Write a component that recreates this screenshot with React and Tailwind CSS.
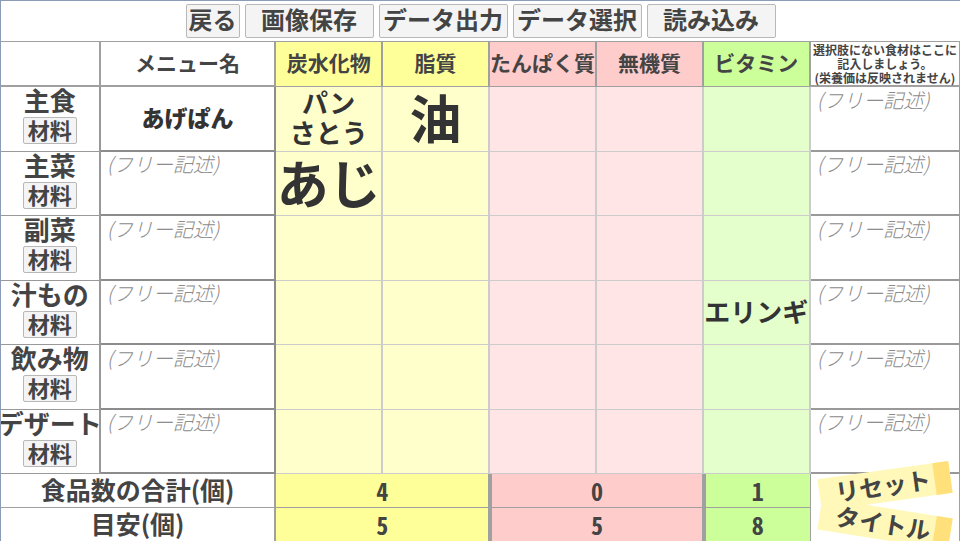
import React from "react";

const columns = [
  { label: "炭水化物", head: "bg-[#ffff99]", body: "bg-[#ffffcc]" },
  { label: "脂質", head: "bg-[#ffff99]", body: "bg-[#ffffcc]" },
  { label: "たんぱく質", head: "bg-[#ffcccc]", body: "bg-[#ffe5e5]" },
  { label: "無機質", head: "bg-[#ffcccc]", body: "bg-[#ffe5e5]" },
  { label: "ビタミン", head: "bg-[#ccff99]", body: "bg-[#e5ffcc]" },
];

const rows = [
  {
    label: "主食",
    menu: "あげぱん",
    foods: {
      0: { lines: ["パン", "さとう"], size: "text-[26px] leading-[30px]" },
      1: { lines: ["油"], size: "text-[52px] leading-[56px]" },
    },
  },
  { label: "主菜", foods: { 0: { lines: ["あじ"], size: "text-[52px] leading-[56px]" } } },
  { label: "副菜", foods: {} },
  { label: "汁もの", foods: { 4: { lines: ["エリンギ"], size: "text-[26px] leading-[30px]" } } },
  { label: "飲み物", foods: {} },
  { label: "デザート", foods: {} },
];

const totals = [
  { label: "食品数の合計(個)", values: [4, 0, 1] },
  { label: "目安(個)", values: [5, 5, 8] },
];

const groups = [
  { span: 2, style: "bg-[#ffff99] border-r-2" },
  { span: 2, style: "bg-[#ffcccc] border-x-2" },
  { span: 1, style: "bg-[#ccff99] border-l-2 border-r" },
];

const buttonStyle =
  "flex items-center justify-center whitespace-nowrap rounded-xs border border-[#b8b8b8] bg-[#f4f4f4] pb-1 leading-none";

function FreeText({ label }) {
  return (
    <textarea
      aria-label={label}
      placeholder="(フリー記述)"
      className="block h-[62px] w-full resize-none rounded-sm bg-white px-1.5 text-xl leading-6 font-light italic outline-none placeholder:text-[#8c8c8c]"
    />
  );
}

function Note({ children, place }) {
  return (
    <button
      className={`absolute left-2 flex h-8 w-[132px] items-center justify-center border-r-16 border-[#ffe07a] bg-[#fff8b8] pb-0.5 pl-3 text-2xl leading-none font-bold whitespace-nowrap ${place}`}
    >
      {children}
    </button>
  );
}

export default function App() {
  return (
    <main className="w-full overflow-hidden border-t border-l border-[#8c9cb8] bg-white font-['Noto_Sans_CJK_JP',sans-serif] font-bold text-[#444444]">
      <nav className="flex h-10 items-center justify-center gap-[5px]">
        <button className={`${buttonStyle} h-[34px] w-[54px] text-2xl`}>戻る</button>
        {["画像保存", "データ出力", "データ選択", "読み込み"].map((text) => (
          <button key={text} className={`${buttonStyle} h-[34px] w-[129px] text-2xl`}>
            {text}
          </button>
        ))}
      </nav>

      <table className="w-full table-fixed border-separate border-spacing-0 border-t border-[#a0a0a0]">
        <colgroup>
          <col className="w-[10.4%]" />
          <col className="w-[18.3%]" />
          {columns.map((column) => (
            <col key={column.label} className="w-[11.15%]" />
          ))}
          <col />
        </colgroup>
        <thead>
          <tr className="h-[45px] text-[21px] leading-6">
            <td className="border-r-2 border-b-2 border-[#a0a0a0] p-0" />
            <th scope="col" className="border-r-2 border-b-2 border-[#a0a0a0] p-0 pb-1">
              メニュー名
            </th>
            {columns.map((column) => (
              <th
                key={column.label}
                scope="col"
                className={`border-r-2 border-b border-[#a0a0a0] p-0 pb-1 ${column.head}`}
              >
                <div className="flex justify-center whitespace-nowrap">{column.label}</div>
              </th>
            ))}
            <th
              scope="col"
              className="border-r border-b-2 border-[#a0a0a0] p-0 text-xs leading-[14px] whitespace-nowrap"
            >
              選択肢にない食材はここに
              <br />
              記入しましょう。
              <br />
              (栄養価は反映されません)
            </th>
          </tr>
        </thead>
        <tbody>
          {rows.map((row) => (
            <tr key={row.label} className="odd:h-[65px] even:h-16">
              <th scope="row" className="border-r-2 border-b border-[#999999] p-0 align-top">
                <div className="flex flex-col items-center">
                  <span className="pb-1 text-[26px] leading-[26px] whitespace-nowrap">{row.label}</span>
                  <button className={`${buttonStyle} h-[27px] w-[54px] text-[22px]`}>材料</button>
                </div>
              </th>
              <td className="border-r-2 border-b-2 border-[#8c8c8c] p-0">
                {row.menu ? (
                  <input
                    aria-label={`${row.label}のメニュー名`}
                    defaultValue={row.menu}
                    className="block h-[62px] w-full bg-transparent pb-1 text-center text-[23px] font-black text-[#333333] outline-none"
                  />
                ) : (
                  <FreeText label={`${row.label}のメニュー名`} />
                )}
              </td>
              {columns.map((column, index) => (
                <td
                  key={column.label}
                  className={`border-r-2 border-b border-[#cccccc] p-0 text-center text-[#333333] ${column.body}`}
                >
                  {row.foods[index] && (
                    <div className={`flex flex-col items-center pb-1 whitespace-nowrap ${row.foods[index].size}`}>
                      {row.foods[index].lines.map((line) => (
                        <span key={line}>{line}</span>
                      ))}
                    </div>
                  )}
                </td>
              ))}
              <td className="border-r border-b-2 border-[#999999] p-0">
                <FreeText label={`${row.label}の自由記述`} />
              </td>
            </tr>
          ))}
        </tbody>
        <tfoot>
          {totals.map((total, index) => (
            <tr key={total.label} className="h-[34px] text-[25px] leading-7">
              <th scope="row" colSpan={2} className="border-r-2 border-b border-[#a0a0a0] p-0 pb-1">
                {total.label}
              </th>
              {groups.map((group, at) => (
                <td
                  key={at}
                  colSpan={group.span}
                  className={`border-b border-[#a0a0a0] p-0 text-center text-2xl leading-8 [font-feature-settings:'hwid','zero'] ${group.style}`}
                >
                  {total.values[at]}
                </td>
              ))}
              {index === 0 && (
                <td rowSpan={2} className="border-r border-[#a0a0a0] p-0 align-top">
                  <div className="relative h-[66px]">
                    <Note place="top-[-4px] -rotate-8">リセット</Note>
                    <Note place="top-[34px] rotate-9">タイトル</Note>
                  </div>
                </td>
              )}
            </tr>
          ))}
        </tfoot>
      </table>
    </main>
  );
}
